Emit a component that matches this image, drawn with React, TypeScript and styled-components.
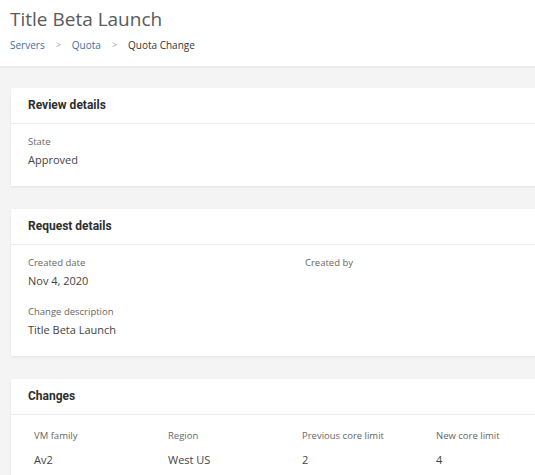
import styled, { createGlobalStyle } from "styled-components";

const GlobalStyle = createGlobalStyle`
  html, body {
    margin: 0;
    padding: 0;
    background-color: #f4f4f4;
    overflow: hidden;
  }
  body {
    font-family: "Open Sans", "Liberation Sans", sans-serif;
    color: #444444;
  }
`;

const Page = styled.div`
  width: 535px;
  min-height: 475px;
  overflow: hidden;
`;

const Header = styled.header`
  background-color: #ffffff;
  height: 68px;
  border-bottom: 2px solid #ececec;
  padding: 6px 0 0 10px;
  box-sizing: border-box;
`;

const Title = styled.h1`
  margin: 0;
  font-size: 19px;
  font-weight: 400;
  line-height: 26px;
  color: #5a5a5a;
`;

const Breadcrumb = styled.nav`
  display: flex;
  align-items: center;
  gap: 11px;
  margin-top: 5px;
  font-size: 10px;
  line-height: 16px;
`;

const Crumb = styled.span<{ $current?: boolean }>`
  color: ${(p) => (p.$current ? "#333333" : "#3e6ea6")};
`;

const Separator = styled.span`
  color: #a8a8a8;
  font-size: 9px;
`;

const Content = styled.main`
  display: flex;
  flex-direction: column;
  gap: 23px;
  padding: 20px 0 0 11px;
  width: 580px;
`;

const Card = styled.section`
  background-color: #ffffff;
  box-shadow: 0 1px 2px rgba(0, 0, 0, 0.08);
`;

const CardHeader = styled.h2`
  margin: 0;
  height: 35px;
  line-height: 35px;
  padding-left: 17px;
  font-family: "Roboto", "Liberation Sans", sans-serif;
  font-size: 12px;
  font-weight: 700;
  color: #2e2e2e;
  border-bottom: 1px solid #ececec;
`;

const CardBody = styled.div`
  padding: 10px 17px 16px;
`;

const FieldGrid = styled.div`
  display: grid;
  grid-template-columns: 277px 277px;
  row-gap: 13px;
`;

const Field = styled.div`
  display: flex;
  flex-direction: column;
`;

const Label = styled.span`
  font-size: 9.5px;
  line-height: 16px;
  color: #666666;
`;

const Value = styled.span`
  font-size: 11px;
  line-height: 20px;
  color: #444444;
`;

const Table = styled.table`
  border-collapse: collapse;
  margin: -2px 0 0 0;
`;

const Th = styled.th`
  width: 128px;
  padding: 0 0 0 6px;
  height: 24px;
  text-align: left;
  font-size: 9.5px;
  font-weight: 400;
  color: #666666;
`;

const Td = styled.td`
  padding: 0 0 0 6px;
  height: 24px;
  font-size: 11px;
  color: #444444;
`;

const columns = ["VM family", "Region", "Previous core limit", "New core limit"];
const rows = [["Av2", "West US", "2", "4"]];

export default function App() {
  return (
    <Page>
      <GlobalStyle />
      <Header>
        <Title>Title Beta Launch</Title>
        <Breadcrumb>
          <Crumb>Servers</Crumb>
          <Separator>&gt;</Separator>
          <Crumb>Quota</Crumb>
          <Separator>&gt;</Separator>
          <Crumb $current>Quota Change</Crumb>
        </Breadcrumb>
      </Header>
      <Content>
        <Card>
          <CardHeader>Review details</CardHeader>
          <CardBody>
            <Field>
              <Label>State</Label>
              <Value>Approved</Value>
            </Field>
          </CardBody>
        </Card>
        <Card>
          <CardHeader>Request details</CardHeader>
          <CardBody>
            <FieldGrid>
              <Field>
                <Label>Created date</Label>
                <Value>Nov 4, 2020</Value>
              </Field>
              <Field>
                <Label>Created by</Label>
              </Field>
              <Field>
                <Label>Change description</Label>
                <Value>Title Beta Launch</Value>
              </Field>
            </FieldGrid>
          </CardBody>
        </Card>
        <Card>
          <CardHeader>Changes</CardHeader>
          <CardBody>
            <Table>
              <thead>
                <tr>
                  {columns.map((c) => (
                    <Th key={c}>{c}</Th>
                  ))}
                </tr>
              </thead>
              <tbody>
                {rows.map((r, i) => (
                  <tr key={i}>
                    {r.map((cell, j) => (
                      <Td key={j}>{cell}</Td>
                    ))}
                  </tr>
                ))}
              </tbody>
            </Table>
          </CardBody>
        </Card>
      </Content>
    </Page>
  );
}
